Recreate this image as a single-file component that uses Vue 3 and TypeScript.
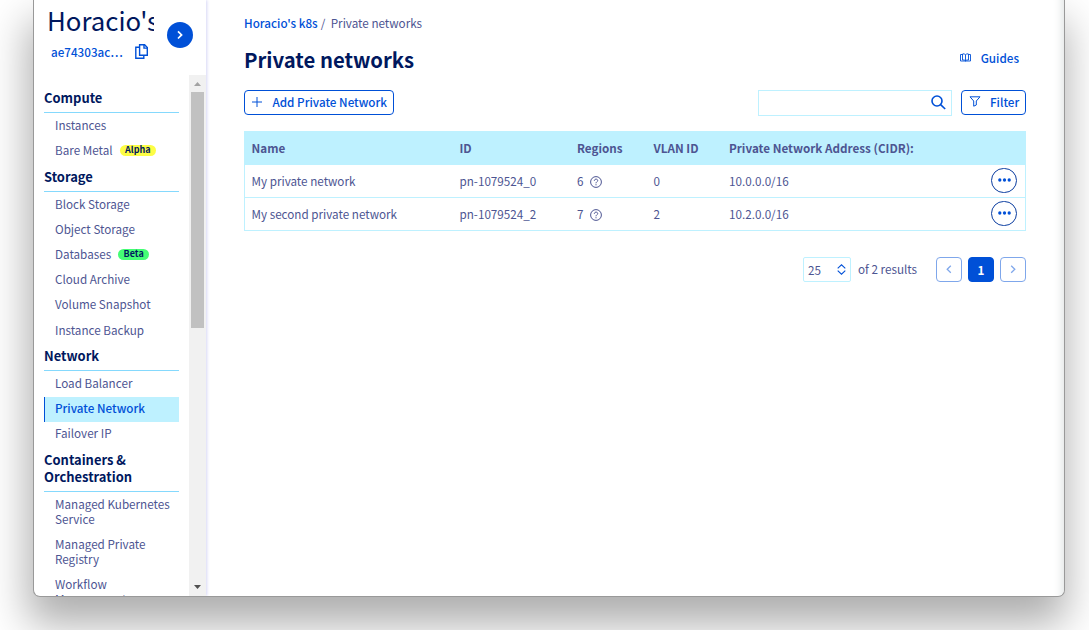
<script setup lang="ts">
interface NavItem {
  label: string
  tag?: string
  active?: boolean
}
interface NavSection {
  title: string
  items: NavItem[]
}
interface NetworkRow {
  name: string
  id: string
  regions: number
  vlan: number
  cidr: string
}

const sections: NavSection[] = [
  { title: 'Compute', items: [{ label: 'Instances' }, { label: 'Bare Metal', tag: 'Alpha' }] },
  {
    title: 'Storage',
    items: [
      { label: 'Block Storage' },
      { label: 'Object Storage' },
      { label: 'Databases', tag: 'Beta' },
      { label: 'Cloud Archive' },
      { label: 'Volume Snapshot' },
      { label: 'Instance Backup' },
    ],
  },
  {
    title: 'Network',
    items: [{ label: 'Load Balancer' }, { label: 'Private Network', active: true }, { label: 'Failover IP' }],
  },
  {
    title: 'Containers & Orchestration',
    items: [
      { label: 'Managed Kubernetes Service' },
      { label: 'Managed Private Registry' },
      { label: 'Workflow Management' },
    ],
  },
]

const rows: NetworkRow[] = [
  { name: 'My private network', id: 'pn-1079524_0', regions: 6, vlan: 0, cidr: '10.0.0.0/16' },
  { name: 'My second private network', id: 'pn-1079524_2', regions: 7, vlan: 2, cidr: '10.2.0.0/16' },
]
</script>

<template>
  <div class="desk">
    <div class="window">
      <aside class="sidebar">
        <header class="project">
          <div class="project-info">
            <div class="project-name">Horacio's</div>
            <div class="project-id">
              <span>ae74303ac…</span>
              <svg width="13" height="15" viewBox="0 0 13 15" fill="none" stroke="#0050d7" stroke-width="1.4">
                <path d="M4.6 .8h5l2.7 2.7v7.7H4.6z" />
                <path d="M9 .8v3.3h3.3M4.6 3.2H.8v11h8v-3" />
              </svg>
            </div>
          </div>
          <button class="toggle" aria-label="Toggle">
            <svg width="8" height="10" viewBox="0 0 8 10" fill="none" stroke="#fff" stroke-width="1.7">
              <path d="M2 1.3 5.6 4.9 2 8.5" />
            </svg>
          </button>
        </header>
        <div class="scroll">
          <nav class="nav">
            <section v-for="s in sections" :key="s.title">
              <h2>{{ s.title }}</h2>
              <a v-for="i in s.items" :key="i.label" class="item" :class="{ active: i.active }">
                <span>{{ i.label }}</span>
                <b v-if="i.tag" class="tag" :class="i.tag.toLowerCase()">{{ i.tag }}</b>
              </a>
            </section>
          </nav>
          <div class="bar">
            <svg class="arrow" width="7" height="4" viewBox="0 0 7 4"><path d="M0 4 3.5 0 7 4z" fill="#a3a3a3" /></svg>
            <div class="thumb"></div>
            <svg class="arrow" width="7" height="4" viewBox="0 0 7 4"><path d="M0 0h7L3.5 4z" fill="#505050" /></svg>
          </div>
        </div>
      </aside>

      <main class="main">
        <div class="crumbs"><a>Horacio's k8s</a><i>/</i><span>Private networks</span></div>
        <div class="title-row">
          <h1>Private networks</h1>
          <a class="guides">
            <svg width="11" height="9" viewBox="0 0 11 9" fill="none" stroke="#0050d7" stroke-width=".9">
              <path d="M2.500 1.500h-2v6.500h10v-6.500h-2M5.500 2v6M2.500 7v-6q2.300-.900 3 1 .700-1.900 3-1v6q-2-.500-3 1-1-1.500-3-1z" />
            </svg>
            <span>Guides</span>
          </a>
        </div>
        <div class="tools">
          <button class="btn add">
            <svg width="10" height="10" viewBox="0 0 10 10" stroke="#0050d7"><path d="M5 0v10M0 5h10" /></svg>
            <span>Add Private Network</span>
          </button>
          <div class="search">
            <svg width="15" height="15" viewBox="0 0 15 15" fill="none" stroke="#0050d7" stroke-width="1.6">
              <circle cx="6" cy="6" r="5" /><path d="m9.600 9.600 4.600 4.400" />
            </svg>
          </div>
          <button class="btn filter">
            <svg width="12" height="11" viewBox="0 0 12 11" fill="none" stroke="#0050d7">
              <path d="M1 .8h10L7.300 5v4L4.700 10.200V5z" />
            </svg>
            <span>Filter</span>
          </button>
        </div>

        <div class="table">
          <div class="row head">
            <span>Name</span><span>ID</span><span>Regions</span><span>VLAN ID</span>
            <span>Private Network Address (CIDR):</span>
          </div>
          <div v-for="r in rows" :key="r.id" class="row">
            <span>{{ r.name }}</span>
            <span>{{ r.id }}</span>
            <span class="regions">
              {{ r.regions }}
              <svg width="12" height="12" viewBox="0 0 12 12" fill="none" stroke="#4d5592">
                <circle cx="6" cy="6" r="5.400" />
                <path d="M4.300 4.800c0-2.200 3.400-2.200 3.400-.200C7.700 5.800 6 5.800 6 7.300M6 8.200v1.100" />
              </svg>
            </span>
            <span class="vlan">{{ r.vlan }}</span>
            <span>{{ r.cidr }}</span>
            <button class="more" aria-label="Actions">
              <svg width="13" height="4" viewBox="0 0 13 4" fill="#0050d7">
                <circle cx="1.800" cy="2" r="1.650" /><circle cx="6.500" cy="2" r="1.650" /><circle cx="11.200" cy="2" r="1.650" />
              </svg>
            </button>
          </div>
        </div>

        <div class="pager">
          <div class="size">
            <span>25</span>
            <svg width="9" height="11" viewBox="0 0 9 11" fill="none" stroke="#0050d7" stroke-width="1.100">
              <path d="M.7 4.300 4.500.8l3.800 3.500M.7 6.700l3.800 3.500 3.800-3.500" />
            </svg>
          </div>
          <span class="total">of 2 results</span>
          <button class="page off">
            <svg width="6" height="9" viewBox="0 0 6 9" fill="none" stroke="#7fa7eb" stroke-width="1.300"><path d="M4.800.8 1.200 4.300l3.600 3.500" /></svg>
          </button>
          <button class="page current">1</button>
          <button class="page off">
            <svg width="6" height="9" viewBox="0 0 6 9" fill="none" stroke="#7fa7eb" stroke-width="1.300"><path d="m1.200.8 3.600 3.500-3.600 3.500" /></svg>
          </button>
        </div>
      </main>
    </div>
  </div>
</template>

<style>
body {
  overflow: hidden;
}
</style>

<style scoped>
* {
  box-sizing: border-box;
}
.desk {
  width: 1089px;
  height: 630px;
  padding: 0 24px 33px 33px;
  background: #fff;
  overflow: hidden;
  font-family: "Noto Sans CJK SC", "Open Sans", sans-serif;
  font-size: 11.680px;
  color: #4d5592;
}
.window {
  display: flex;
  width: 1032px;
  height: 597px;
  background: #fff;
  border: 1px solid #999;
  border-top: 0;
  border-radius: 0 0 7px 7px;
  overflow: hidden;
  box-shadow: -2px 24px 42px 3px rgba(0, 0, 0, 0.32);
}
button {
  font: inherit;
  padding: 0;
  margin: 0;
}
.sidebar {
  width: 172px;
  flex: none;
  display: flex;
  flex-direction: column;
  box-shadow: 1px 0 3px #d5d5f5;
}
.project {
  height: 75px;
  flex: none;
  display: flex;
  padding-left: 13px;
}
.project-info {
  width: 107px;
  overflow: hidden;
}
.project-name {
  height: 42px;
  line-height: 40px;
  font-size: 25.800px;
  color: #00185e;
  white-space: nowrap;
}
.project-id {
  display: flex;
  align-items: center;
  gap: 12px;
  padding-left: 4px;
  height: 19px;
  line-height: 19px;
  font-weight: 500;
  color: #0050d7;
}
.toggle {
  width: 26px;
  height: 26px;
  margin: 22px 0 0 13px;
  border: 0;
  border-radius: 50%;
  background: #0050d7;
  display: flex;
  align-items: center;
  justify-content: center;
}
.scroll {
  flex: 1;
  min-height: 0;
  display: flex;
}
.nav {
  width: 155px;
  padding: 10.200px 10px 0;
  overflow: hidden;
}
h2 {
  margin: 0 0 .6px;
  padding: 3.700px 0 6px;
  border-bottom: 1px solid #85d9fd;
  font-size: 12.950px;
  line-height: 17px;
  font-weight: 700;
  color: #00185e;
}
.item {
  display: flex;
  padding: 3.700px 0 6.490px 11px;
  line-height: 15px;
}
.item.active {
  padding-left: 10px;
  border-left: 1px solid #0050d7;
  background: #bef1ff;
  color: #0050d7;
  font-weight: 500;
}
.tag {
  height: 11px;
  margin: 3px 0 0 7px;
  padding: 0 5.500px;
  border-radius: 6px;
  font-size: 9px;
  line-height: 10px;
  color: #00185e;
}
.alpha {
  background: #fdfd45;
}
.beta {
  background: #45fd75;
}
.bar {
  width: 17px;
  background: #f1f1f1;
  display: flex;
  flex-direction: column;
  align-items: center;
  padding: 7px 0 7px;
}
.thumb {
  width: 13px;
  height: 236px;
  margin: 6px 0 auto;
  background: #c1c1c1;
}
.main {
  flex: 1;
  padding: 14px 38px 0;
  box-shadow: inset -12px 0 10px -10px #dfe3e3;
}
.crumbs {
  height: 20px;
  line-height: 18px;
}
.crumbs a {
  font-weight: 500;
  color: #0050d7;
}
.crumbs i {
  font-style: normal;
  margin: 0 5.500px 0 3px;
}
.title-row {
  display: flex;
  justify-content: space-between;
  height: 56px;
  padding-right: 7px;
}
h1 {
  margin: 10px 0 0;
  font-size: 20.300px;
  line-height: 30px;
  font-weight: 700;
  color: #00185e;
}
.guides {
  display: flex;
  align-items: center;
  gap: 10px;
  height: 20px;
  margin-top: 13px;
  font-weight: 500;
  color: #0050d7;
}
.tools {
  display: flex;
}
.btn {
  height: 25px;
  display: flex;
  align-items: center;
  border: 1px solid #0050d7;
  border-radius: 4px;
  background: #fff;
  color: #0050d7;
  font-weight: 500;
  white-space: nowrap;
}
.btn span {
  line-height: 17px;
  margin-bottom: 2.500px;
}
.add {
  width: 150px;
  padding-left: 7px;
  gap: 10.500px;
}
.btn svg {
  margin-bottom: 2px;
}
.search {
  width: 194px;
  height: 26px;
  margin: 0 9px 0 auto;
  padding: 4px 5px;
  border: 1px solid #bef1ff;
}
.search svg {
  display: block;
  margin-left: auto;
}
.filter {
  width: 65px;
  padding-left: 7px;
  gap: 9px;
}
.table {
  margin-top: 15px;
  border: 1px solid #bef1ff;
  border-top: 0;
}
.row {
  display: grid;
  grid-template-columns: 208px 117.500px 76.500px 75.500px 1fr 26px;
  align-items: center;
  height: 33px;
  padding: 0 8px 0 6.500px;
  border-top: 1px solid #bef1ff;
}
.row > span {
  margin-bottom: 2px;
}
.row.head {
  height: 33px;
  background: #bef1ff;
  font-weight: 700;
}
.regions {
  display: flex;
  align-items: center;
  gap: 7px;
}
.regions svg {
  margin-top: 3px;
}
.more {
  width: 26px;
  height: 25px;
  margin-bottom: 2px;
  border: 1px solid #0b3da0;
  border-radius: 13px;
  background: #fff;
  display: flex;
  align-items: center;
  justify-content: center;
}
.pager {
  display: flex;
  justify-content: flex-end;
  height: 25px;
  margin-top: 26px;
}
.size {
  width: 48px;
  border: 1px solid #bef1ff;
  border-radius: 2px;
  padding: 0 4px;
  display: flex;
  align-items: center;
  justify-content: space-between;
}
.total {
  width: 78px;
  padding-left: 7px;
  line-height: 24px;
}
.page {
  width: 26px;
  height: 25px;
  margin-left: 6px;
  border: 1px solid #7fa7eb;
  border-radius: 4px;
  background: #fff;
  display: flex;
  align-items: center;
  justify-content: center;
}
.total + .page {
  margin-left: 7px;
}
.page.current {
  border-color: #0050d7;
  background: #0050d7;
  color: #fff;
  font-weight: 700;
}
</style>
